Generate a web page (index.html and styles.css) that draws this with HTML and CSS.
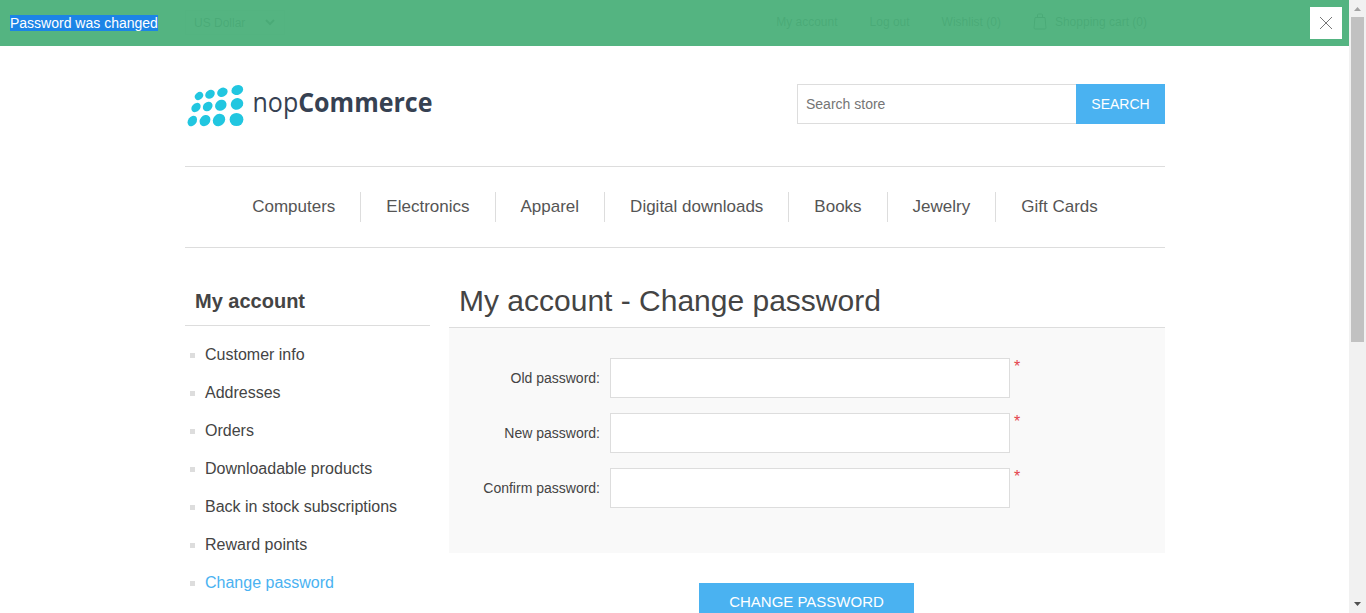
FILE: index.html
```html
<!DOCTYPE html>
<html lang="en">
<head>
<meta charset="utf-8">
<title>My account - Change password</title>
<link rel="stylesheet" href="styles.css">
</head>
<body>
<div class="page">
  <header class="topbar">
    <div class="currency"><span>US Dollar</span>
      <svg width="10" height="7" viewBox="0 0 10 7"><path d="M1 1l4 4 4-4" fill="none" stroke="#444" stroke-width="2"/></svg>
    </div>
    <nav class="links">
      <a>My account</a><a>Log out</a><a>Wishlist (0)</a>
      <a class="cart"><svg width="14" height="17" viewBox="0 0 14 17"><path d="M2 4.5h10l1 10.5q0 1-1 1H2q-1 0-1-1zM4.500 4V2q0-1 1-1h3q1 0 1 1v2" fill="none" stroke="#444"/></svg>Shopping cart (0)</a>
    </nav>
  </header>
  <div class="header-lower">
    <svg class="logo" width="250" height="50" viewBox="185 80 250 50">
      <g fill="#21c6e0">
        <ellipse cx="199" cy="96" rx="4.500" ry="3.600" transform="rotate(-40 199 96)"/>
        <ellipse cx="210" cy="94.300" rx="5.100" ry="4.100" transform="rotate(-35 210 94.300)"/>
        <ellipse cx="222.400" cy="92.300" rx="5.500" ry="4.400" transform="rotate(-30 222.400 92.300)"/>
        <ellipse cx="237.300" cy="90" rx="6" ry="4.900" transform="rotate(-22 237.300 90)"/>
        <ellipse cx="196" cy="107.500" rx="5.200" ry="4" transform="rotate(-45 196 107.500)"/>
        <ellipse cx="207.700" cy="106.500" rx="5.300" ry="4.300" transform="rotate(-42 207.700 106.500)"/>
        <ellipse cx="220.800" cy="105.300" rx="6" ry="5.200" transform="rotate(-35 220.800 105.300)"/>
        <ellipse cx="237" cy="103.900" rx="6.400" ry="5.700" transform="rotate(-30 237 103.900)"/>
        <ellipse cx="192.300" cy="121" rx="5.700" ry="4.200" transform="rotate(-55 192.300 121)"/>
        <ellipse cx="205" cy="120.600" rx="6" ry="5" transform="rotate(-50 205 120.600)"/>
        <ellipse cx="219" cy="120" rx="6.600" ry="5.800" transform="rotate(-45 219 120)"/>
        <ellipse cx="236.500" cy="119.500" rx="6.900" ry="6.600"/>
      </g>
      <text class="brand" x="252.500" y="112" textLength="180" lengthAdjust="spacingAndGlyphs">nop<tspan class="strong">Commerce</tspan></text>
    </svg>
    <form class="search"><input type="text" placeholder="Search store"><button type="button">SEARCH</button></form>
  </div>
  <nav class="menu">
    <a>Computers</a><a>Electronics</a><a>Apparel</a><a>Digital downloads</a><a>Books</a><a>Jewelry</a><a>Gift Cards</a>
  </nav>
  <div class="columns">
    <aside class="side">
      <h2>My account</h2>
      <ul>
        <li>Customer info</li><li>Addresses</li><li>Orders</li><li>Downloadable products</li><li>Back in stock subscriptions</li><li>Reward points</li><li class="active">Change password</li>
      </ul>
    </aside>
    <main class="center">
      <h1>My account - Change password</h1>
      <div class="fieldset">
        <div class="row"><label>Old password:</label><input type="password"><span class="required">*</span></div>
        <div class="row"><label>New password:</label><input type="password"><span class="required">*</span></div>
        <div class="row"><label>Confirm password:</label><input type="password"><span class="required">*</span></div>
      </div>
      <button class="submit" type="button">CHANGE PASSWORD</button>
    </main>
  </div>
</div>
<div class="notification">
  <p><span class="selected">Password was changed</span></p>
  <span class="close"><svg width="32" height="32" viewBox="0 0 32 32"><path d="M10 10L22 22M22 10L10 22" stroke="#777" stroke-width="1"/></svg></span>
</div>
<div class="scrollbar">
  <svg width="17" height="17" viewBox="0 0 17 17"><path d="M5 11h7L8.500 7z" fill="#a3a3a3"/></svg>
  <div class="thumb"></div>
  <svg class="down" width="17" height="17" viewBox="0 0 17 17"><path d="M5 6h7L8.500 10z" fill="#505050"/></svg>
</div>
</body>
</html>
```

FILE: styles.css
```css
* { box-sizing: border-box; margin: 0; padding: 0; }
html, body { height: 613px; overflow: hidden; }
body { background: #fff; color: #444; font: 14px "Liberation Sans", Arial, sans-serif; }
svg { display: block; }
.page { width: 980px; height: 613px; margin-left: 185px; overflow: hidden; }
.topbar { height: 46px; display: flex; justify-content: space-between; font-size: 12px; }
.currency { width: 100px; height: 25px; margin-top: 10px; padding: 0 9px 0 8px; border: 1px solid #ddd; display: flex; align-items: center; justify-content: space-between; font-size: 12px; }
.links { display: flex; align-items: center; gap: 32px; padding-right: 18px; height: 43px; }
.cart { display: flex; align-items: center; gap: 8px; }
.header-lower { height: 120px; display: flex; justify-content: space-between; align-items: flex-start; }
.logo { margin-top: 34px; overflow: visible; }
.brand { font: 26.5px "Open Sans", "Noto Sans", sans-serif; fill: #364152; }
.strong { font-weight: 700; }
.search { display: flex; width: 368px; height: 40px; margin-top: 38px; }
.search input { width: 279px; border: 1px solid #ddd; border-right: 0; padding: 0 8px; font: 14px "Liberation Sans", Arial, sans-serif; color: #777; }
.search input::placeholder { color: #757575; }
.search button { width: 89px; border: 0; background: #4ab2f1; color: #fff; font: 14px "Liberation Sans", Arial, sans-serif; }
.menu { height: 82px; border-top: 1px solid #ddd; border-bottom: 1px solid #ddd; display: flex; justify-content: center; align-items: center; color: #555; font-size: 17px; }
.menu a { height: 30px; line-height: 29px; padding: 0 25px; }
.menu a + a { border-left: 1px solid #ddd; }
.columns { display: flex; justify-content: space-between; }
.side { width: 245px; padding-top: 30px; }
.side h2 { height: 48px; border-bottom: 1px solid #ddd; padding-left: 10px; font-size: 20px; line-height: 46px; }
.side ul { list-style: none; padding: 10px 0 0 5px; }
.side li { display: flex; align-items: center; gap: 10px; height: 38px; font-size: 16px; }
.side li::before { content: ""; width: 5px; height: 5px; background: #ddd; }
.side .active { color: #4ab2f1; }
.center { width: 716px; padding-top: 25px; }
.center h1 { height: 55px; border-bottom: 1px solid #ddd; padding-left: 10px; font-size: 30px; font-weight: 400; line-height: 55px; }
.fieldset { height: 225px; background: #f9f9f9; padding-top: 30px; }
.row { display: flex; height: 40px; margin-bottom: 15px; }
.row label { width: 151px; line-height: 40px; text-align: right; margin-right: 10px; }
.row input { width: 400px; border: 1px solid #ddd; background: #fff; }
.required { color: #e4434b; margin-left: 4px; font-size: 16px; line-height: 18px; }
.submit { display: block; margin: 30px 0 0 250px; width: 215px; height: 37px; border: 0; background: #4ab2f1; color: #fff; font: 15px "Liberation Sans", Arial, sans-serif; }
.notification { position: absolute; left: 0; top: 0; width: 1349px; height: 46px; padding: 0 7px 0 10px; display: flex; align-items: center; justify-content: space-between; background: rgba(75, 176, 122, .95); color: #fff; }
.selected { background: #1c84e6; }
.close { background: #fff; }
.scrollbar { position: absolute; right: 0; top: 0; width: 17px; height: 613px; display: flex; flex-direction: column; background: #f1f1f1; }
.thumb { width: 13px; height: 325px; margin-left: 2px; background: #c1c1c1; }
.down { margin-top: auto; }
```
